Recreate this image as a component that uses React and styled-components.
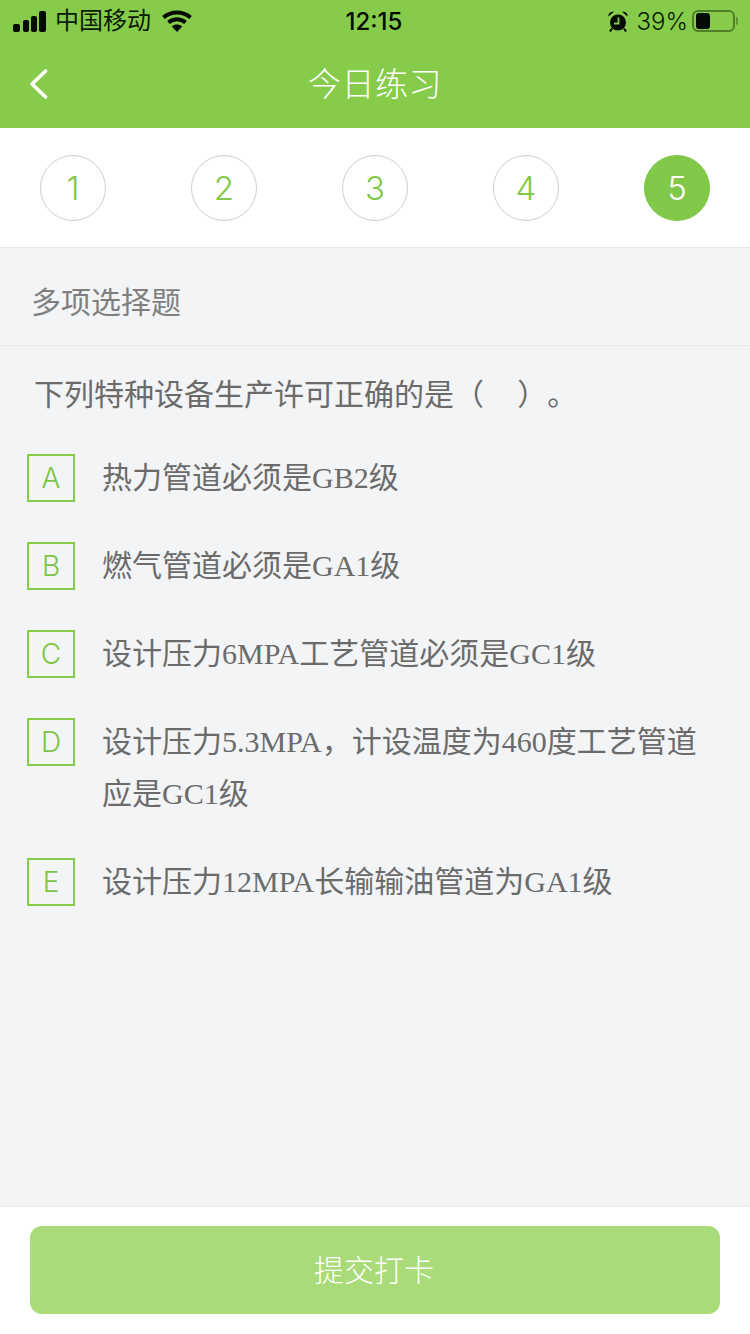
import React from "react";
import styled, { createGlobalStyle } from "styled-components";

const GlobalStyle = createGlobalStyle`
  html, body {
    margin: 0;
    padding: 0;
    background: #f2f4f6;
  }
  * {
    box-sizing: border-box;
  }
`;

const Page = styled.div`
  width: 750px;
  height: 1334px;
  display: flex;
  flex-direction: column;
  overflow: hidden;
  background: #f2f4f6;
  font-family: "Liberation Sans", "Noto Sans CJK SC", sans-serif;
`;

const Header = styled.header`
  height: 128px;
  flex-shrink: 0;
  background: #86cc4a;
`;

const StatusBar = styled.div`
  height: 40px;
  padding: 1px 12px 0 13px;
  display: grid;
  grid-template-columns: 1fr auto 1fr;
  align-items: center;
  color: #0b1a05;
`;

const StatusLeft = styled.div`
  display: flex;
  align-items: center;
`;

const Carrier = styled.span`
  font-size: 24px;
  line-height: 40px;
  margin: 0 11px 0 9px;
`;

const Clock = styled.span`
  margin-left: -3px;
  font-size: 24px;
  font-weight: 500;
  font-family: "Inter", "Liberation Sans", sans-serif;
  color: #050a02;
`;

const StatusRight = styled.div`
  display: flex;
  align-items: center;
  justify-content: flex-end;
`;

const Percent = styled.span`
  font-size: 24px;
  margin: 0 4px 0 9px;
  font-family: "Inter", "Liberation Sans", sans-serif;
  font-weight: 300;
`;

const Battery = styled.div`
  width: 43px;
  height: 22px;
  padding: 1px 2px;
  border: 2px solid #4f7f2a;
  border-radius: 6px;
`;

const BatteryLevel = styled.div`
  width: 40%;
  height: 100%;
  background: #050a02;
  border-radius: 3px;
`;

const BatteryCap = styled.div`
  width: 2px;
  height: 8px;
  margin-left: 1px;
  background: #5d9034;
  border-radius: 0 2px 2px 0;
`;

const NavBar = styled.div`
  height: 88px;
  position: relative;
  display: flex;
  align-items: center;
  justify-content: center;
`;

const BackButton = styled.button`
  position: absolute;
  left: 24px;
  top: 24px;
  width: 30px;
  height: 40px;
  padding: 0;
  border: none;
  background: none;
`;

const Title = styled.h1`
  margin: 0 0 4px;
  font-size: 33px;
  font-weight: 300;
  letter-spacing: 0.5px;
  color: #fff;
`;

const Steps = styled.nav`
  height: 120px;
  flex-shrink: 0;
  padding: 27px 40px 0;
  display: flex;
  justify-content: space-between;
  align-items: flex-start;
  background: #fff;
  border-bottom: 1px solid #e4e5e6;
`;

const Step = styled.div`
  width: 66px;
  height: 66px;
  border-radius: 50%;
  display: flex;
  align-items: center;
  justify-content: center;
  font-family: "Inter", "Liberation Sans", sans-serif;
  font-size: 33px;
  font-weight: 300;
  border: 1px solid ${(p) => (p.$active ? "#80c848" : "#cfcfcb")};
  background: ${(p) => (p.$active ? "#80c848" : "#fff")};
  color: ${(p) => (p.$active ? "#fff" : "#80c848")};
`;

const SectionLabel = styled.div`
  height: 98px;
  flex-shrink: 0;
  padding: 6px 0 0 31px;
  display: flex;
  align-items: center;
  font-size: 30px;
  color: #7f7f7f;
  border-bottom: 1px solid #e7e8ea;
`;

const Main = styled.main`
  flex: 1;
  padding: 26px 0 0;
`;

const Question = styled.p`
  margin: 0 0 34px 34px;
  font-size: 30px;
  line-height: 46px;
  color: #6b6b6b;
  text-spacing-trim: space-all;
`;

const OptionList = styled.ul`
  margin: 0;
  padding: 0 40px 0 27px;
  list-style: none;
  display: flex;
  flex-direction: column;
  gap: 36px;
`;

const Option = styled.li`
  display: flex;
  align-items: flex-start;
`;

const OptionKey = styled.span`
  width: 48px;
  height: 48px;
  margin: 2px 27px 0 0;
  flex-shrink: 0;
  display: flex;
  align-items: center;
  justify-content: center;
  border: 2px solid #86cc4a;
  font-family: "Inter", "Liberation Sans", sans-serif;
  font-size: 28px;
  font-weight: 300;
  color: #7cc545;
`;

const OptionText = styled.span`
  font-family: "Liberation Serif", "Noto Sans CJK SC", serif;
  font-size: 30px;
  line-height: 52px;
  color: #6b6b6b;
`;

const Footer = styled.footer`
  height: 128px;
  flex-shrink: 0;
  padding: 19px 30px 0;
  background: #fff;
  border-top: 1px solid #e6e8ec;
`;

const SubmitButton = styled.button`
  width: 100%;
  height: 88px;
  padding: 0 2px 4px 0;
  border: none;
  border-radius: 12px;
  background: #a9dc79;
  color: #fff;
  font-family: inherit;
  font-size: 30px;
  font-weight: 300;
`;

const steps = [1, 2, 3, 4, 5];

const options = [
  { key: "A", text: "热力管道必须是GB2级" },
  { key: "B", text: "燃气管道必须是GA1级" },
  { key: "C", text: "设计压力6MPA工艺管道必须是GC1级" },
  { key: "D", text: "设计压力5.3MPA，计设温度为460度工艺管道应是GC1级" },
  { key: "E", text: "设计压力12MPA长输输油管道为GA1级" },
];

function SignalIcon() {
  return (
    <svg width="33" height="21" viewBox="0 0 33 21" fill="#050a02">
      <rect x="0" y="13" width="7" height="8" rx="2" />
      <rect x="10" y="9" width="6" height="12" rx="2" />
      <rect x="18" y="5" width="6" height="16" rx="2" />
      <rect x="26" y="0" width="7" height="21" rx="2" />
    </svg>
  );
}

function WifiIcon() {
  return (
    <svg width="30" height="22" viewBox="0 0 30 22" fill="none" stroke="#050a02" strokeWidth="4">
      <path d="M1.5 7.5C9 0.8 21 0.8 28.5 7.5" />
      <path d="M6.5 12.5C11.5 8.2 18.5 8.2 23.5 12.5" />
      <path d="M15 22L9.8 16.4C12.8 14 17.2 14 20.2 16.4Z" fill="#050a02" stroke="none" />
    </svg>
  );
}

function AlarmIcon() {
  return (
    <svg width="20" height="21" viewBox="0 0 20 21">
      <circle cx="10" cy="11.5" r="8" fill="#050a02" />
      <path d="M0.5 5.5C0 2.5 2.5 0 6 0.8Z M19.5 5.5C20 2.5 17.5 0 14 0.8Z" fill="#050a02" />
      <path d="M4 17.5L2 20.5M16 17.5L18 20.5" stroke="#050a02" strokeWidth="2" />
      <path d="M10.5 6.5V12.5H6" fill="none" stroke="#86cc4a" strokeWidth="1.8" />
    </svg>
  );
}

function BackIcon() {
  return (
    <svg width="30" height="40" viewBox="0 0 30 40" fill="none" stroke="#fff" strokeWidth="3.6" strokeLinecap="round" strokeLinejoin="round">
      <path d="M21.6 7L8 20L21.6 33" />
    </svg>
  );
}

export default function App() {
  return (
    <Page>
      <GlobalStyle />
      <Header>
        <StatusBar>
          <StatusLeft>
            <SignalIcon />
            <Carrier>中国移动</Carrier>
            <WifiIcon />
          </StatusLeft>
          <Clock>12:15</Clock>
          <StatusRight>
            <AlarmIcon />
            <Percent>39%</Percent>
            <Battery>
              <BatteryLevel />
            </Battery>
            <BatteryCap />
          </StatusRight>
        </StatusBar>
        <NavBar>
          <BackButton aria-label="返回">
            <BackIcon />
          </BackButton>
          <Title>今日练习</Title>
        </NavBar>
      </Header>
      <Steps>
        {steps.map((n) => (
          <Step key={n} $active={n === 5}>
            {n}
          </Step>
        ))}
      </Steps>
      <SectionLabel>多项选择题</SectionLabel>
      <Main>
        <Question>下列特种设备生产许可正确的是（&nbsp;&nbsp;&nbsp;&nbsp;）。</Question>
        <OptionList>
          {options.map((o) => (
            <Option key={o.key}>
              <OptionKey>{o.key}</OptionKey>
              <OptionText>{o.text}</OptionText>
            </Option>
          ))}
        </OptionList>
      </Main>
      <Footer>
        <SubmitButton>提交打卡</SubmitButton>
      </Footer>
    </Page>
  );
}
